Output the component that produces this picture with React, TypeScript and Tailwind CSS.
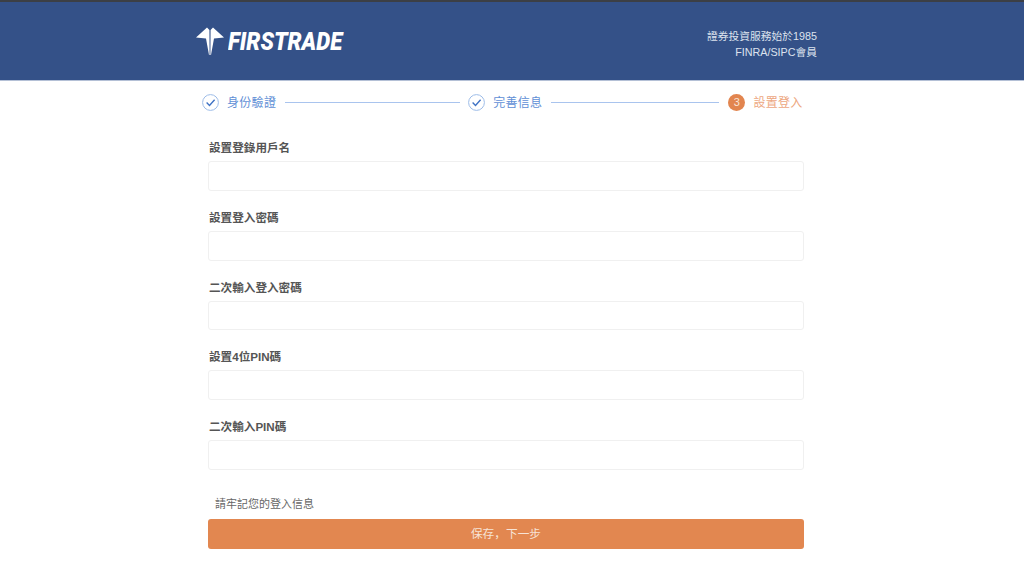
import React from 'react';

const cjk = "font-['Liberation_Sans','Noto_Sans_CJK_SC',sans-serif]";

const fields = ['設置登錄用戶名', '設置登入密碼', '二次輸入登入密碼', '設置4位PIN碼', '二次輸入PIN碼'];

function Logo() {
  return (
    <div className="flex items-center gap-[3px]">
      <svg width="30" height="28" viewBox="0 0 30 28" className="shrink-0">
        <path d="M1 10.5 L12 0.5 L14.4 3 L14.6 28 L14 28 L11 11.5 Z" fill="#fff" />
        <path d="M29 10.5 L18 0.5 L15.6 3 L15.4 28 L16 28 L19 11.5 Z" fill="#fff" />
      </svg>
      <span className="block w-[116px] origin-left scale-x-[0.89] whitespace-nowrap font-['Roboto',sans-serif] text-[25px] leading-none font-black italic text-white">FIRSTRADE</span>
    </div>
  );
}

function DoneIcon() {
  return (
    <svg width="17" height="17" viewBox="0 0 17 17" className="shrink-0">
      <circle cx="8.5" cy="8.5" r="7.9" fill="none" stroke="#9dbce8" strokeWidth="1" />
      <path d="M4.6 8.6 L7.5 11.4 L12.6 5.8" fill="none" stroke="#3f72c4" strokeWidth="1.4" />
    </svg>
  );
}

export default function App() {
  return (
    <div className={`min-h-[562px] bg-white ${cjk}`}>
      <header className="h-[81px] border-t-2 border-b border-t-[#3c3f45] border-b-[#b4c0d6] bg-[#345188]">
        <div className="ml-[195px] mr-[207px] flex h-full items-center justify-between">
          <Logo />
          <div className="mt-[5px] text-right text-[10.75px] leading-[16px] text-[#dde3ee]">
            <p>證券投資服務始於1985</p>
            <p>FINRA/SIPC會員</p>
          </div>
        </div>
      </header>

      <div className="ml-[202px] mr-[210px] mt-[13px] flex h-[17px] items-center whitespace-nowrap text-[12px]">
        <DoneIcon />
        <span className="ml-[8px] text-[#5f8fd6] tracking-[0.3px]">身份驗證</span>
        <div className="ml-[9px] mr-[8px] h-px w-[175px] shrink-0 bg-[#a9c4ee]" />
        <DoneIcon />
        <span className="ml-[8px] text-[#5f8fd6] tracking-[0.3px]">完善信息</span>
        <div className="ml-[9px] mr-[9px] h-px w-[168px] shrink-0 bg-[#a9c4ee]" />
        <span className="flex h-[17px] w-[17px] shrink-0 items-center justify-center rounded-full bg-[#e2854f] text-[11px] text-[#f8e4d8]">3</span>
        <span className="ml-[8px] text-[#eda77f] tracking-[0.3px]">設置登入</span>
      </div>

      <main className="ml-[208px] mr-[220px] mt-[25px]">
        {fields.map((label) => (
          <div key={label} className="mb-[10px]">
            <label className="block h-[25px] pt-[3px] pl-[1px] text-[11.6px] leading-[18px] font-bold text-[#555]">{label}</label>
            <input className="block h-[29.75px] w-full rounded-[3px] border border-[#f0f0f0] bg-white" />
            <div className="h-[5px]" />
          </div>
        ))}
        <p className="mt-[20px] pl-[7px] text-[11px] leading-[18px] text-[#666]">請牢記您的登入信息</p>
        <button className="mt-[6px] h-[30px] w-full rounded-[3px] bg-[#e28750] text-[11.7px] text-[#f7e3d6]">保存，下一步</button>
      </main>
    </div>
  );
}
